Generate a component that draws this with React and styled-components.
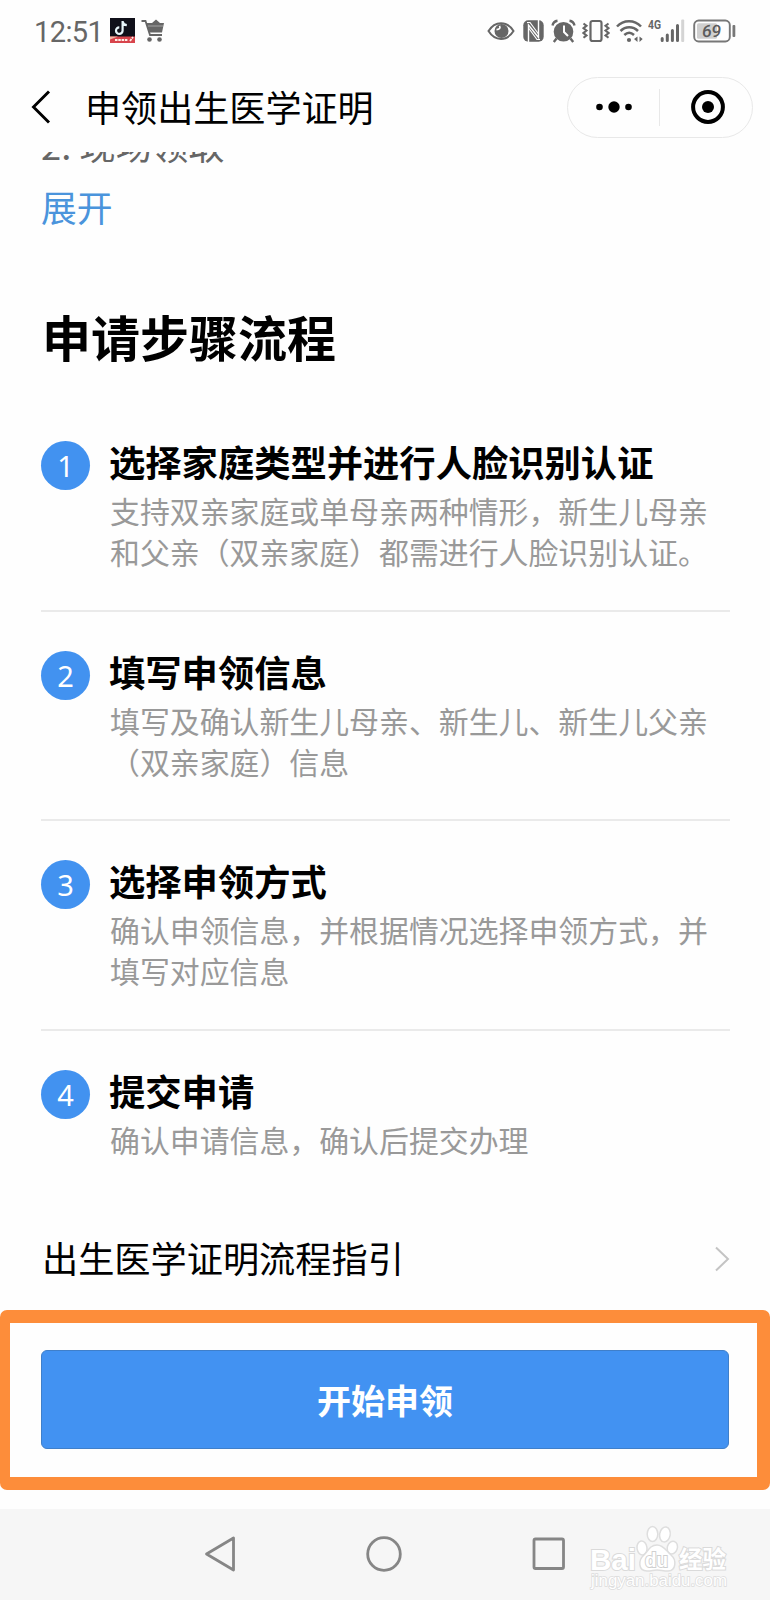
import React from 'react';
import styled, { createGlobalStyle } from 'styled-components';

const GlobalStyle = createGlobalStyle`
  * {
    box-sizing: border-box;
  }

  body {
    margin: 0;
    background-color: #fefefe;
    font-family: 'Noto Sans CJK SC', sans-serif;
    text-spacing-trim: space-all;
  }
`;

const Screen = styled.div`
  display: flex;
  flex-direction: column;
  width: 770px;
  height: 1600px;
  overflow: hidden;
`;

const StatusBar = styled.div`
  display: flex;
  align-items: center;
  height: 61px;
  padding: 0 33px 0 34px;
  flex: none;
`;

const Clock = styled.span`
  width: 76px;
  font-family: Roboto, sans-serif;
  font-size: 29px;
  line-height: 32px;
  letter-spacing: -0.6px;
  color: #666666;
  padding-top: 3px;
`;

const StatusIcon = styled.svg`
  display: block;
  flex: none;
  margin-left: ${props => props.$left || 0}px;
`;

const StatusIcons = styled.div`
  display: flex;
  align-items: center;
  margin-left: auto;
`;

const NavBar = styled.header`
  display: flex;
  align-items: center;
  height: 91px;
  padding: 0 17px 0 31px;
  flex: none;
`;

const Title = styled.h1`
  margin: -2px 0 0 34px;
  font-size: 36.1px;
  line-height: 50px;
  font-weight: 400;
  color: #000000;
`;

const Capsule = styled.div`
  display: flex;
  align-items: center;
  width: 186px;
  height: 61px;
  margin: 1px 0 0 auto;
  border: 1px solid #e8e8e8;
  border-radius: 31px;
`;

const CapsuleButton = styled.div`
  display: flex;
  flex: none;
  align-items: center;
  justify-content: center;
  width: ${props => props.$width}px;
  height: 37px;
  border-left: ${props => (props.$divided ? '1px solid #e8e8e8' : 'none')};
`;

const Content = styled.main`
  display: flex;
  flex-direction: column;
  flex: none;
  height: 1158px;
  padding: 0 40px 0 41px;
  overflow: hidden;
`;

const Scrolled = styled.p`
  margin: -33px 0 0;
  font-size: 36.3px;
  line-height: 50px;
  color: #666666;
`;

const Expand = styled.a`
  margin-top: 12px;
  font-size: 35.8px;
  line-height: 50px;
  color: #4a94dc;
`;

const Heading = styled.h2`
  margin: 68px 0 0 1px;
  font-size: 49px;
  line-height: 74px;
  font-weight: 700;
  color: #000000;
`;

const Steps = styled.ol`
  margin: 29px 0 0;
  padding: 0;
  list-style-type: none;
`;

const Step = styled.li`
  display: flex;
  height: ${props => (props.$last ? 152 : 209.7)}px;
  padding-top: 29px;
  border-bottom: ${props => (props.$last ? 'none' : '2px solid #eaeaea')};
`;

const Badge = styled.span`
  display: flex;
  align-items: center;
  justify-content: center;
  flex: none;
  width: 49px;
  height: 49px;
  margin: 10px 20px 0 0;
  border-radius: 50%;
  background-color: #4292f0;
  font-family: 'Noto Sans', sans-serif;
  font-size: 29px;
  line-height: 49px;
  color: #ffffff;
`;

const StepTitle = styled.h3`
  margin: 3px 0 0 -1px;
  font-size: 36.3px;
  line-height: 54px;
  font-weight: 700;
  color: #000000;
`;

const StepText = styled.p`
  margin: 2px 0 0;
  font-size: 29.9px;
  line-height: 41px;
  color: #999999;
`;

const GuideRow = styled.div`
  display: flex;
  align-items: center;
  justify-content: space-between;
  height: 60px;
  margin-top: 46px;
  font-size: 36.2px;
  line-height: 54px;
  color: #000000;

  span {
    margin: -4px 0 0 1px;
  }
`;

const Highlight = styled.div`
  flex: none;
  height: 180px;
  padding: 27px 28px 0 31px;
  border: 13px solid #fd8d3a;
  border-left-width: 10px;
  border-radius: 7px;
`;

const StartButton = styled.button`
  display: flex;
  align-items: center;
  justify-content: center;
  width: 688px;
  height: 99px;
  padding: 0;
  border: 1px solid #3f7fca;
  border-radius: 6px;
  background-color: #4292f2;
  font-family: inherit;
  font-size: 34px;
  font-weight: 700;
  color: #ffffff;
`;

const SystemNav = styled.footer`
  position: relative;
  flex: none;
  display: flex;
  align-items: flex-start;
  justify-content: space-between;
  height: 91px;
  margin-top: 19px;
  padding: 27px 204px 0 204px;
  background-color: #f6f6f6;
`;

const Watermark = styled.svg`
  position: absolute;
  left: 585px;
  top: 4px;
`;

const steps = [
  {
    title: '选择家庭类型并进行人脸识别认证',
    text: '支持双亲家庭或单母亲两种情形，新生儿母亲和父亲（双亲家庭）都需进行人脸识别认证。',
  },
  {
    title: '填写申领信息',
    text: '填写及确认新生儿母亲、新生儿、新生儿父亲（双亲家庭）信息',
  },
  {
    title: '选择申领方式',
    text: '确认申领信息，并根据情况选择申领方式，并填写对应信息',
  },
  {
    title: '提交申请',
    text: '确认申请信息，确认后提交办理',
  },
];

const VideoAppIcon = () => (
  <StatusIcon width="25" height="25" viewBox="0 0 25 25">
    <rect width="25" height="25" fill="#10101a" />
    <rect y="18.5" width="25" height="6.5" fill="#d8444c" />
    <path d="M0 18.5h8l-8 3z" fill="#f3b9a8" />
    <path d="M5 22h13M20 23l3-4" stroke="#fff0e8" strokeWidth="1.8" strokeDasharray="2.5 0.8" />
    <path d="M12.6 3v9.5a3.3 3.3 0 1 1-3.3-3.2M12.6 3.5c.4 2.2 1.8 3.5 4.2 3.7" fill="none" stroke="#e8f6fa" strokeWidth="2.2" />
  </StatusIcon>
);

const CartIcon = () => (
  <StatusIcon $left={6} width="24" height="25" viewBox="0 0 24 25">
    <path d="M0.5 3h4l4.5 14h12" fill="none" stroke="#666" strokeWidth="1.8" />
    <path d="M5 5h6l4-3.5L19 5h4l-2 9.5H8z" fill="#666" />
    <path d="M7 8h15" stroke="#b5b5b5" strokeWidth="0.8" />
    <circle cx="8.5" cy="21.5" r="2.3" fill="#666" />
    <circle cx="18.5" cy="21.5" r="2.3" fill="#666" />
  </StatusIcon>
);

const EyeIcon = () => (
  <StatusIcon width="28" height="24" viewBox="0 0 28 24">
    <path d="M1.5 12C8 1.5 20 1.5 26.5 12 20 22.5 8 22.5 1.5 12z" fill="none" stroke="#666" strokeWidth="2" />
    <circle cx="14.5" cy="12" r="7" fill="#666" />
    <path d="M12.5 6.8c1.2 2.2 0 3.9-3 3.9" fill="none" stroke="#fefefe" strokeWidth="1.7" />
  </StatusIcon>
);

const NfcIcon = () => (
  <StatusIcon $left={8} width="21" height="22" viewBox="0 0 21 22">
    <rect x="0.3" y="0.3" width="20.4" height="21.4" rx="5" fill="#666" />
    <path d="M5.5 22V5l10 12.5V0" fill="none" stroke="#fefefe" strokeWidth="1.4" />
    <path d="M4 2.5h3l8.5 11.5M5.5 8l8.5 11.5h3" fill="none" stroke="#fefefe" strokeWidth="1.2" />
  </StatusIcon>
);

const AlarmIcon = () => (
  <StatusIcon $left={7} width="25" height="24" viewBox="0 0 25 24">
    <circle cx="12.5" cy="12.7" r="9.8" fill="#666" />
    <path d="M1.5 6.5C2 4 4 2 6.500 1.700M18.500 1.700c2.500.3 4.500 2.300 5 4.800" fill="none" stroke="#666" strokeWidth="2.4" />
    <path d="M5.5 19.5 2.8 23M19.5 19.5l2.7 3.5" stroke="#666" strokeWidth="2.4" />
    <path d="M13 6.5v6.5l4 4" fill="none" stroke="#fefefe" strokeWidth="2" />
  </StatusIcon>
);

const VibrateIcon = () => (
  <StatusIcon $left={6} width="28" height="24" viewBox="0 0 28 24">
    <rect x="8.5" y="2" width="11" height="20" rx="2" fill="none" stroke="#666" strokeWidth="2.2" />
    <path d="M1.5 4.5l3 2.3-3 2.4 3 2.4-3 2.4 3 2.4-3 2.4M26.5 4.5l-3 2.3 3 2.4-3 2.4 3 2.4-3 2.4 3 2.4" fill="none" stroke="#666" strokeWidth="2.1" />
  </StatusIcon>
);

const WifiIcon = () => (
  <StatusIcon $left={6} width="27" height="24" viewBox="0 0 27 24">
    <path d="M1 7.5c6.5-7 17.5-7 24 0M4.5 12c5-5 12.500-5 17.500 0M8.300 16c3-2.800 6.700-2.800 9.700 0" fill="none" stroke="#666" strokeWidth="2.5" />
    <circle cx="13" cy="21" r="2.1" fill="#666" />
    <path d="M21.5 17.5v5.500l-3.500-3zM23.500 17.500v5.500l3.200-3z" fill="#666" />
  </StatusIcon>
);

const SignalIcon = () => (
  <StatusIcon $left={5} width="37" height="25" viewBox="0 0 37 25">
    <text x="0" y="10.5" fontFamily="Roboto, sans-serif" fontSize="12.5" fontWeight="700" fill="#666" textLength="13" lengthAdjust="spacingAndGlyphs">4G</text>
    <path d="M14.2 22.5v-2M19.3 22.5v-5.5M24.4 22.5v-10M29.5 22.5v-15" stroke="#666" strokeWidth="3" strokeLinecap="round" />
    <rect x="33.2" y="1.5" width="3" height="22.5" rx="1" fill="#d4d4d4" />
  </StatusIcon>
);

const BatteryIcon = () => (
  <StatusIcon $left={8} width="44" height="24" viewBox="0 0 44 24">
    <rect x="1.2" y="1.5" width="35.6" height="21" rx="4.5" fill="none" stroke="#777" strokeWidth="1.9" />
    <rect x="4" y="4.3" width="20" height="15.4" rx="1.5" fill="#cfcfcf" />
    <rect x="39.5" y="6" width="2.8" height="12" rx="1" fill="#777" />
    <text x="18.5" y="18" textAnchor="middle" fontFamily="Roboto, sans-serif" fontSize="17" fontWeight="500" fill="#5c5c5c" transform="skewX(-6) translate(1.5 0)">69</text>
  </StatusIcon>
);

const BaiduWatermark = () => (
  <Watermark width="160" height="80" viewBox="0 0 160 80">
    <g fill="#fff" stroke="#dedede" strokeWidth="1.5">
      <ellipse cx="57" cy="35" rx="5" ry="7" transform="rotate(-8 57 35)" />
      <ellipse cx="67.5" cy="21" rx="5.3" ry="7.5" />
      <ellipse cx="80" cy="21.5" rx="5.3" ry="7.5" transform="rotate(10 80 21)" />
      <ellipse cx="87.5" cy="34.5" rx="5" ry="6.5" transform="rotate(18 87 34)" />
      <path d="M72 32c-7 0-9 6-13 10-6 5-6 16 3 16 5 0 6-1 10-1s6 1 11 1c8 0 9-11 3-16-5-4-7-10-14-10z" />
    </g>
    <g paintOrder="stroke" stroke="#dadada" strokeWidth="2" fill="#fff" fontFamily="Liberation Sans, sans-serif" fontWeight="700">
      <text x="5" y="57" fontSize="30" textLength="46" lengthAdjust="spacingAndGlyphs">Bai</text>
      <text x="60" y="54" fontSize="20" stroke="#d0d0d0" textLength="23" lengthAdjust="spacingAndGlyphs">du</text>
      <text x="94" y="55" fontSize="23.5" fontFamily="Noto Sans CJK SC, sans-serif">经验</text>
    </g>
    <text x="6" y="73" fontSize="17" paintOrder="stroke" stroke="#dcdcdc" strokeWidth="1.5" fill="#fff" fontFamily="Liberation Sans, sans-serif" textLength="136" lengthAdjust="spacingAndGlyphs">jingyan.baidu.com</text>
  </Watermark>
);

const App = () => (
  <Screen>
    <GlobalStyle />
    <StatusBar>
      <Clock>12:51</Clock>
      <VideoAppIcon />
      <CartIcon />
      <StatusIcons>
        <EyeIcon />
        <NfcIcon />
        <AlarmIcon />
        <VibrateIcon />
        <WifiIcon />
        <SignalIcon />
        <BatteryIcon />
      </StatusIcons>
    </StatusBar>

    <NavBar>
      <svg width="20" height="34" viewBox="0 0 20 34">
        <path d="M18 1.5 2.5 17 18 32.5" fill="none" stroke="#000" strokeWidth="2.9" />
      </svg>
      <Title>申领出生医学证明</Title>
      <Capsule>
        <CapsuleButton $width={91}>
          <svg width="38" height="12" viewBox="0 0 38 12">
            <circle cx="4.5" cy="6" r="3.3" />
            <circle cx="19" cy="6" r="5.7" />
            <circle cx="33.5" cy="6" r="3.3" />
          </svg>
        </CapsuleButton>
        <CapsuleButton $width={97} $divided>
          <svg width="34" height="34" viewBox="0 0 34 34">
            <circle cx="17" cy="17" r="14.9" fill="none" stroke="#000" strokeWidth="4" />
            <circle cx="17" cy="17" r="6" />
          </svg>
        </CapsuleButton>
      </Capsule>
    </NavBar>

    <Content>
      <Scrolled>2. 现场领取</Scrolled>
      <Expand>展开</Expand>
      <Heading>申请步骤流程</Heading>
      <Steps>
        {steps.map((step, i) => (
          <Step key={step.title} $last={i === steps.length - 1}>
            <Badge>{i + 1}</Badge>
            <div>
              <StepTitle>{step.title}</StepTitle>
              <StepText>{step.text}</StepText>
            </div>
          </Step>
        ))}
      </Steps>
      <GuideRow>
        <span>出生医学证明流程指引</span>
        <svg width="15" height="26" viewBox="0 0 15 26">
          <path d="M1 1.5 13 13 1 24.5" fill="none" stroke="#c4c4c4" strokeWidth="2" />
        </svg>
      </GuideRow>
    </Content>

    <Highlight>
      <StartButton>开始申领</StartButton>
    </Highlight>

    <SystemNav>
      <svg width="32" height="36" viewBox="0 0 32 36" fill="none" stroke="#868686" strokeWidth="2.8" strokeLinejoin="round">
        <path d="M29.5 2v32L2.5 18z" />
      </svg>
      <svg width="36" height="36" viewBox="0 0 36 36" fill="none" stroke="#868686" strokeWidth="2.8">
        <circle cx="18" cy="18" r="16.3" />
      </svg>
      <svg width="34" height="36" viewBox="0 0 34 36" fill="none" stroke="#868686" strokeWidth="2.8">
        <rect x="2" y="3" width="29.5" height="29.5" rx="1.5" />
      </svg>
      <BaiduWatermark />
    </SystemNav>
  </Screen>
);

export default App;
